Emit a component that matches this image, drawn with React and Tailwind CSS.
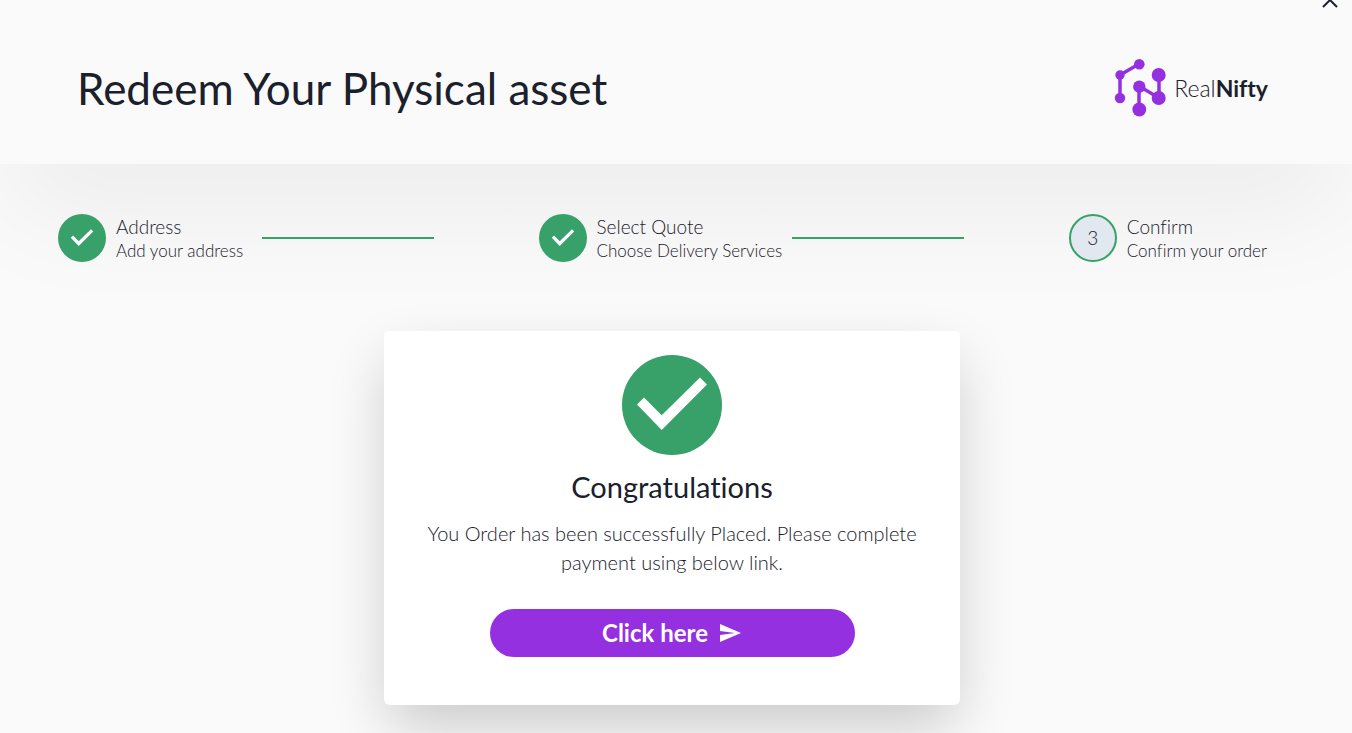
import React from "react";
import { MdSend } from "react-icons/md";

const steps = [
  { title: "Address", description: "Add your address" },
  { title: "Select Quote", description: "Choose Delivery Services" },
  { title: "Confirm", description: "Confirm your order" },
];

const activeStep = 2;

function CheckIcon({ size }) {
  return (
    <svg width={size} height={size} viewBox="0 0 100 100" fill="currentColor" aria-hidden="true">
      <path d="M15 49.5 22 42.5 39.7 60.3 78 22.5 85 29.5 39.7 75Z" />
    </svg>
  );
}

function Logo() {
  return (
    <a href="#" className="flex items-center gap-2 text-[#1a202c]">
      <svg width="52" height="58" viewBox="0 0 52 58" fill="#9530e0" stroke="#9530e0" aria-hidden="true">
        <path d="M25 5 6 16V39M25 50V27L45 39V16" fill="none" strokeWidth="3.5" />
        <g stroke="none">
          <circle cx="25.3" cy="5.3" r="5.3" />
          <circle cx="6" cy="16" r="4.7" />
          <circle cx="6" cy="39" r="5.2" />
          <circle cx="25.3" cy="27.7" r="6.2" />
          <circle cx="25.3" cy="50.5" r="6.9" />
          <circle cx="44.7" cy="16" r="7" />
          <circle cx="44.7" cy="39" r="7" />
        </g>
      </svg>
      <span className="text-[23px] font-light">
        Real<span className="font-bold">Nifty</span>
      </span>
    </a>
  );
}

function Step({ step, index }) {
  const done = index < activeStep;
  return (
    <li className="flex items-center gap-2.5">
      {done ? (
        <span className="flex size-12 shrink-0 items-center justify-center rounded-full bg-[#38a169] text-white">
          <CheckIcon size={32} />
        </span>
      ) : (
        <span className="flex size-12 shrink-0 items-center justify-center rounded-full border-2 border-[#38a169] bg-[#e2e8f0] text-[19px] font-light">
          {index + 1}
        </span>
      )}
      <div className="min-w-34 pt-0.5 font-light whitespace-nowrap">
        <h3 className="text-[19px] leading-6">{step.title}</h3>
        <p className="text-[17px] leading-6">{step.description}</p>
      </div>
      {index < steps.length - 1 && <div className="h-0.5 w-43 bg-[#38a169]" />}
    </li>
  );
}

export default function App() {
  return (
    <div className="relative min-h-screen overflow-hidden bg-[#fafafa] font-['Lato',sans-serif] text-[#1a202c] [font-variant-ligatures:no-common-ligatures]">
      <button type="button" aria-label="Close" className="absolute -top-2.5 right-3 p-0.5">
        <svg width="16" height="16" viewBox="0 0 16 16" fill="none" stroke="currentColor" strokeWidth="2">
          <path d="M1 1l14 14M15 1L1 15" />
        </svg>
      </button>

      <header className="flex items-center justify-between bg-[#fafafa] pt-13 pr-[84px] pb-10 pl-[77px] shadow-[0_60px_110px_-10px_rgba(0,0,0,0.055)]">
        <h1 className="text-[44px] leading-[72px]">Redeem Your Physical asset</h1>
        <Logo />
      </header>

      <ol className="flex items-center justify-between pt-[49px] pr-[85px] pl-[58px]">
        {steps.map((step, index) => (
          <Step key={step.title} step={step} index={index} />
        ))}
      </ol>

      <main className="flex justify-center pt-[68px] pr-2 pb-7">
        <section className="flex w-full max-w-xl flex-col items-center rounded-md bg-white px-10 pt-6 pb-12 text-center shadow-[0_25px_60px_-5px_rgba(0,0,0,0.2)]">
          <div className="flex size-25 items-center justify-center rounded-full bg-[#38a169] text-white">
            <CheckIcon size={100} />
          </div>
          <h2 className="mt-3 text-[29px] leading-10">Congratulations</h2>
          <p className="mt-3 text-xl leading-[29px] font-light">
            You Order has been successfully Placed. Please complete payment using below link.
          </p>
          <a
            href="#"
            className="mt-8 flex h-12 w-[365px] items-center justify-center gap-2.5 rounded-full bg-[#9530e0] text-2xl font-bold text-white"
          >
            Click here
            <MdSend size={24} />
          </a>
        </section>
      </main>
    </div>
  );
}
